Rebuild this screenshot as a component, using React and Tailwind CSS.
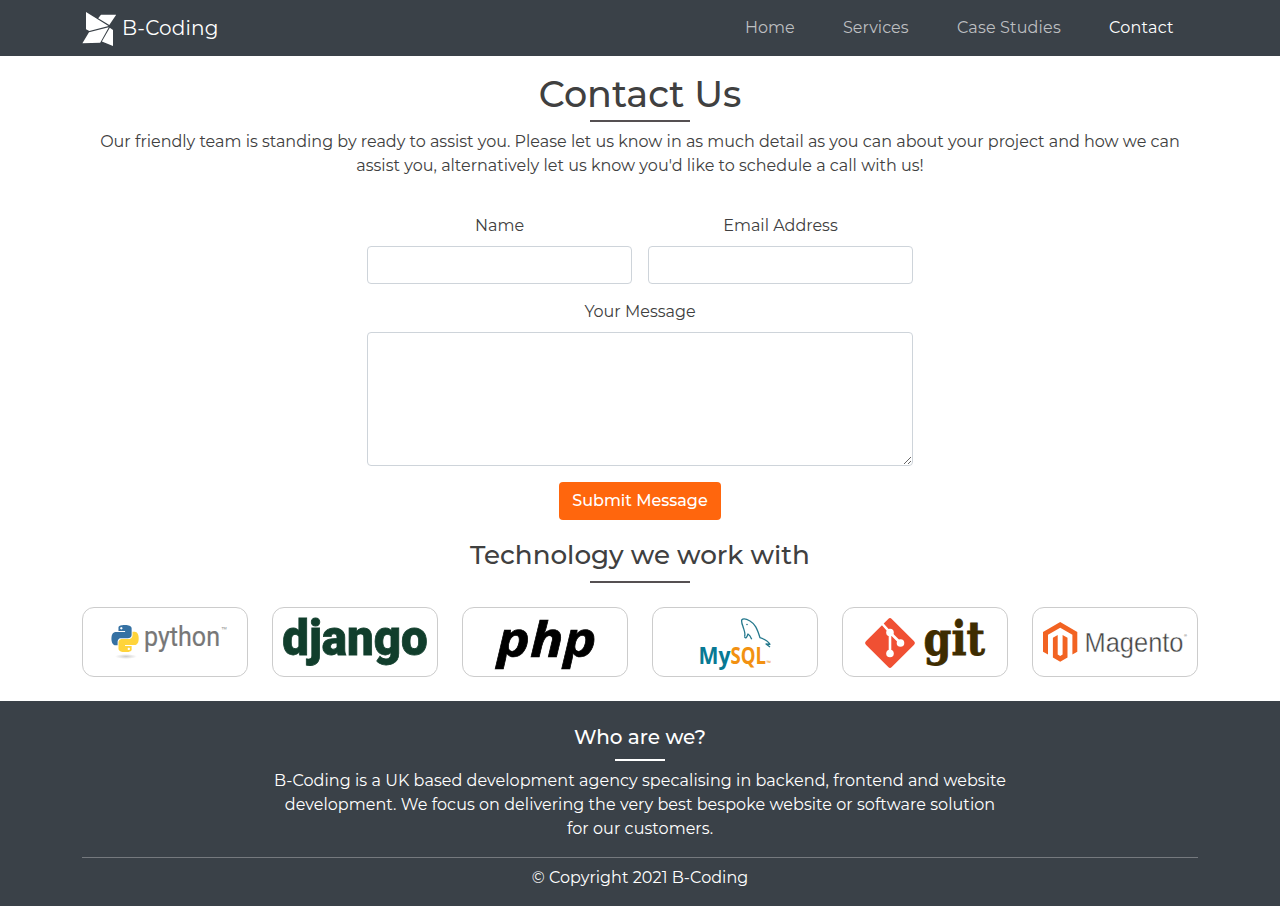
import React from "react";

const LogoMark = () => (
  <svg className="h-9 w-[35px]" viewBox="0 0 35 36" fill="#fff">
    <path d="M4 2 26.500 16 7.300 21 4 19.300ZM19 4.800H34.200L27.300 15 16.200 8.300ZM7 22.200 26.800 17.300 18.200 32.800 .4 33.200ZM27.800 17.800 31 20V36L19.900 31.500Z" />
  </svg>
);

const Python = () => (
  <svg className="h-[50px] w-36 overflow-visible" viewBox="0 0 144 50">
    <defs>
      <radialGradient id="shade">
        <stop offset="0" stopColor="#ccc" />
        <stop offset="1" stopColor="#fff" />
      </radialGradient>
    </defs>
    <ellipse cx="33" cy="38.500" rx="11" ry="2.500" fill="url(#shade)" />
    <g transform="translate(18.500 7) scale(1.130)">
      <path fill="#3571a3" d="M14.25.18l.9.2.73.26.59.3.45.32.34.34.25.34.16.33.1.3.04.26.02.2-.01.13V8.5l-.05.63-.13.55-.21.46-.26.38-.3.31-.33.25-.35.19-.35.14-.33.1-.3.07-.26.04-.21.02H8.77l-.69.05-.59.14-.5.22-.41.27-.33.32-.27.35-.2.36-.15.37-.1.35-.07.32-.04.27-.02.21v3.06H3.17l-.21-.03-.28-.07-.32-.12-.35-.18-.36-.26-.36-.36-.35-.46-.32-.59-.28-.73-.21-.88-.14-1.05-.05-1.23.06-1.22.16-1.04.24-.87.32-.71.36-.57.4-.44.42-.33.42-.24.4-.16.36-.1.32-.05.24-.01h.16l.06.01h8.16v-.83H6.18l-.01-2.75-.02-.37.05-.34.11-.31.17-.28.25-.26.31-.23.38-.2.44-.18.51-.15.58-.12.64-.1.71-.06.77-.04.84-.02 1.27.05zm-6.3 1.98l-.23.33-.08.41.08.41.23.34.33.22.41.09.41-.09.33-.22.23-.34.08-.41-.08-.41-.23-.33-.33-.22-.41-.09-.41.09z" />
      <path fill="#ffd43b" d="M21.04 6.11l.28.06.32.12.35.18.36.27.36.35.35.47.32.59.28.73.21.88.14 1.04.05 1.23-.06 1.23-.16 1.04-.24.86-.32.71-.36.57-.4.45-.42.33-.42.24-.4.16-.36.09-.32.05-.24.02-.16-.01h-8.22v.82h5.84l.01 2.76.02.36-.05.34-.11.31-.17.29-.25.25-.31.24-.38.2-.44.17-.51.15-.58.13-.64.09-.71.07-.77.04-.84.01-1.27-.04-1.07-.14-.9-.2-.73-.25-.59-.3-.45-.33-.34-.34-.25-.34-.16-.33-.1-.3-.04-.25-.02-.2.01-.13v-5.34l.05-.64.13-.54.21-.46.26-.38.3-.32.33-.24.35-.2.35-.14.33-.1.3-.06.26-.04.21-.02.13-.01h5.84l.69-.05.59-.14.5-.21.41-.28.33-.32.27-.35.2-.36.15-.36.1-.35.07-.32.04-.28.02-.21V6.07h2.09l.14.01zm-6.47 14.25l-.23.33-.08.41.08.41.23.33.33.23.41.08.41-.08.33-.23.23-.33.08-.41-.08-.41-.23-.33-.33-.23-.41-.08-.41.08z" />
    </g>
    <text x="51" y="27.800" fill="#777" stroke="#777" strokeWidth=".2" fontFamily="Roboto, sans-serif" fontSize="27" textLength="76" lengthAdjust="spacingAndGlyphs">python</text>
    <text x="128.500" y="13.500" fill="#999" fontFamily="Noto Sans, sans-serif" fontSize="7">™</text>
  </svg>
);

const Django = () => (
  <svg className="h-[50px] w-36 overflow-visible" viewBox="0 0 144 50">
    <text x="-.8" y="37" fill="#113e2c" stroke="#113e2c" strokeWidth=".8" fontFamily="Roboto, sans-serif" fontWeight="900" fontSize="50" textLength="145.500" lengthAdjust="spacingAndGlyphs">django</text>
  </svg>
);

const Php = () => (
  <svg className="h-[50px] w-[100px] overflow-visible" viewBox="0 0 100 50">
    <text x="2" y="38.500" fill="#000" stroke="#000" strokeWidth=".7" fontFamily="Open Sans, sans-serif" fontStyle="italic" fontWeight="700" fontSize="49" textLength="99.500" lengthAdjust="spacingAndGlyphs">php</text>
  </svg>
);

const MySql = () => (
  <svg className="h-[50px] w-[72px] overflow-visible" viewBox="0 0 72 50">
    <text x="-.5" y="46" fill="#087994" fontFamily="Open Sans, sans-serif" fontWeight="700" fontSize="23.500" textLength="32" lengthAdjust="spacingAndGlyphs">My</text>
    <text x="31.500" y="46" fill="#f29111" fontFamily="Open Sans, sans-serif" fontWeight="700" fontSize="23.500" textLength="35.500" lengthAdjust="spacingAndGlyphs">SQL</text>
    <text x="67.500" y="47" fill="#f29111" fontFamily="Open Sans, sans-serif" fontSize="6">™</text>
    <path d="M45.500 18.700C47 15 44.500 11 44 8.500C43 6 42.300 4 42.700 2C44 .4 46.500 .5 51 3C56 6 58 10 61 19.700C65 21 69 23 71 26.300L67 26L71 29M45.500 18.700Q47 22 49 16Q51 17 52.700 21.300" fill="none" stroke="#24788d" strokeWidth="1.300" strokeLinejoin="round" />
    <circle cx="48" cy="6.500" r=".8" fill="#24788d" />
  </svg>
);

const Git = () => (
  <svg className="h-[50px] w-[120px] overflow-visible" viewBox="0 0 120 50">
    <rect x="6.700" y="6.700" width="36.600" height="36.600" rx="2.500" transform="rotate(45 25 25)" fill="#f05033" />
    <path d="M17 5.500 25 14.500V35.500M25 14.500 35.500 25" fill="none" stroke="#fff" strokeWidth="2.600" />
    <g fill="#fff">
      <circle cx="25" cy="14.500" r="3.800" />
      <circle cx="25" cy="35.500" r="3.800" />
      <circle cx="35.500" cy="25" r="3.800" />
    </g>
    <text x="58.500" y="36.700" fill="#3e2c00" stroke="#3e2c00" strokeWidth=".8" fontFamily="DejaVu Serif, serif" fontWeight="700" fontSize="46" textLength="61.500" lengthAdjust="spacingAndGlyphs">git</text>
  </svg>
);

const Magento = () => (
  <svg className="h-[50px] w-36 overflow-visible" viewBox="0 0 144 50">
    <path fill="#f26322" d="M17.200 4 34.300 13.900V33.700L29.400 36.500V16.700L17.200 9.700 5 16.700V36.500L0 33.700V13.900ZM9.900 19.700 14.700 16.900V36.600L17.200 38 19.600 36.600V16.900L24.500 19.700V39.500L17.200 43.800 9.900 39.500Z" />
    <text x="41.500" y="34" fill="#444" stroke="#fff" strokeWidth=".4" fontFamily="Liberation Sans, sans-serif" fontSize="28" textLength="99" lengthAdjust="spacingAndGlyphs">Magento</text>
    <text x="141" y="19" fill="#4d4d4d" fontFamily="Liberation Sans, sans-serif" fontSize="4">®</text>
  </svg>
);

const logos = [Python, Django, Php, MySql, Git, Magento];

export default function App() {
  return (
    <div className="min-h-[906px] bg-white font-[Montserrat,sans-serif] text-base leading-6 text-[#404040]">
      <header className="h-14 bg-[#3a4148] px-[82px]">
        <div className="flex h-14 items-center justify-between whitespace-nowrap">
          <a className="flex items-center gap-[5px] text-xl tracking-[0.15px] text-white">
            <LogoMark />
            <span>B-Coding</span>
          </a>
          <nav className="flex gap-12 pr-6 text-[#bdbfc1]">
            <a className="w-[50px]">Home</a>
            <a className="w-[66px]">Services</a>
            <a className="w-[104px] tracking-[0.15px]">Case Studies</a>
            <a className="w-[65px] tracking-[0.25px] text-white">Contact</a>
          </nav>
        </div>
      </header>

      <main className="flex flex-col items-center px-[82px] text-center">
        <h1 className="mt-4 h-12 text-[36.500px] leading-[44px] font-medium">Contact Us</h1>
        <div className="h-0.5 w-[100px] bg-[#555052]" />
        <p className="mt-2 whitespace-nowrap">
          Our friendly team is standing by ready to assist you. Please let us know in as much detail as you can about your project and how we can
          <br />
          <span className="tracking-[0.02px]">assist you, alternatively let us know you'd like to schedule a call with us!</span>
        </p>

        <form className="mt-9 grid w-[546px] grid-cols-2 gap-x-4">
          <label className="flex flex-col gap-2">
            Name
            <input className="h-[38px] rounded border border-[#ced4da] px-3" />
          </label>
          <label className="flex flex-col gap-2">
            Email Address
            <input className="h-[38px] rounded border border-[#ced4da] px-3" />
          </label>
          <label className="col-span-2 mt-4 flex flex-col gap-2">
            Your Message
            <textarea className="h-[134px] resize-y rounded border border-[#ced4da] px-3 py-1.5" />
          </label>
          <button type="button" className="col-span-2 mt-4 h-[38px] w-[162px] justify-self-center rounded bg-[#ff660d] font-medium whitespace-nowrap text-white">
            Submit Message
          </button>
        </form>

        <h2 className="mt-[18px] h-[43px] text-[26.200px] leading-[35px] font-medium">Technology we work with</h2>
        <div className="h-0.5 w-[100px] bg-[#555052]" />
        <div className="mt-6 grid w-full grid-cols-6 gap-6">
          {logos.map((Logo, i) => (
            <div key={i} className="flex h-[70px] items-start justify-center rounded-[12px] border border-[#ccc] pt-2.5">
              <Logo />
            </div>
          ))}
        </div>
      </main>

      <footer className="mt-6 flex h-[205px] flex-col items-center bg-[#3a4148] px-[82px] text-center text-white">
        <h3 className="mt-6 h-[34px] text-xl leading-6 font-medium">Who are we?</h3>
        <div className="h-0.5 w-[50px] bg-white" />
        <p className="mt-2 tracking-[0.05px] whitespace-nowrap">
          B-Coding is a UK based development agency specalising in backend, frontend and website
          <br />
          development. We focus on delivering the very best bespoke website or software solution
          <br />
          for our customers.
        </p>
        <div className="mt-4 w-full border-t border-[#75797e] pt-2 tracking-[0.05px]">© Copyright 2021 B-Coding</div>
      </footer>
    </div>
  );
}
